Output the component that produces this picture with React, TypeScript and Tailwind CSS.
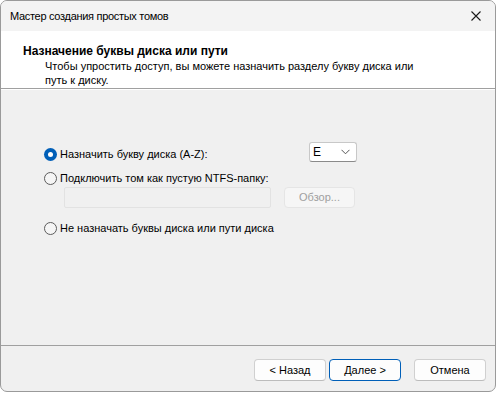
import React from 'react';

const font = { fontFamily: '"Liberation Sans", Arial, sans-serif' };

function Radio({ checked }: { checked?: boolean }) {
  if (checked) {
    return (
      <span className="w-[13px] h-[13px] rounded-full bg-[#005fb8] flex items-center justify-center shrink-0">
        <span className="w-[5px] h-[5px] rounded-full bg-white" />
      </span>
    );
  }
  return <span className="w-[13px] h-[13px] rounded-full border border-[#5c5c5c] bg-[#f5f5f5] shrink-0" />;
}

function Button({ label, primary }: { label: string; primary?: boolean }) {
  return (
    <div
      className={
        'w-[72px] h-[22px] rounded-[4px] bg-[#fdfdfd] flex items-center justify-center text-[11px] text-black border ' +
        (primary ? 'border-[#005fb8]' : 'border-[#d0d0d0] border-b-[#bcbcbc]')
      }
    >
      {label}
    </div>
  );
}

export default function App() {
  return (
    <div className="w-[499px] h-[393px] bg-white" style={font}>
      <div className="w-[496px] h-[392px] border border-[#9a9a9a] rounded-[7px] overflow-hidden flex flex-col bg-[#f0f0f0]">
        {/* Title bar */}
        <div className="h-[30px] shrink-0 bg-[#f3f3f3] flex items-center justify-between pl-[9px] pr-[10px]">
          <span className="text-[11px] tracking-[-0.3px] text-black">Мастер создания простых томов</span>
          <svg width="10" height="10" viewBox="0 0 10 10" className="mr-[4px]">
            <path d="M0.5 0.5 L9.5 9.5 M9.5 0.5 L0.5 9.5" stroke="#1a1a1a" strokeWidth="1.1" />
          </svg>
        </div>

        {/* Header */}
        <div className="h-[58px] shrink-0 bg-white pl-[22px] pt-[14px] border-b border-[#a0a0a0]">
          <div className="text-[12px] font-bold text-black leading-[13px]">Назначение буквы диска или пути</div>
          <div className="pl-[22px] text-[11px] text-black leading-[14px] mt-[1px]">
            Чтобы упростить доступ, вы можете назначить разделу букву диска или
            <br />
            путь к диску.
          </div>
        </div>
        <div className="h-px bg-white shrink-0" />

        {/* Body */}
        <div className="flex-1 pl-[43px] pt-[52px] text-[11px] text-black">
          <div className="flex h-[20px]">
            <div className="w-[265px] flex items-center gap-[3px] pt-[4px]">
              <Radio checked />
              <span>Назначить букву диска (A-Z):</span>
            </div>
            <div className="w-[48px] h-[20px] bg-white border border-[#c8c8c8] border-b-[#8a8a8a] rounded-[3px] flex items-center justify-between pl-[3px] pr-[6px] text-[12px]">
              <span>E</span>
              <svg width="9" height="6" viewBox="0 0 9 6">
                <path d="M0.5 0.8 L4.5 4.8 L8.5 0.8" fill="none" stroke="#555" strokeWidth="1" />
              </svg>
            </div>
          </div>

          <div className="flex items-center gap-[3px] h-[16px] mt-[8px]">
            <Radio />
            <span>Подключить том как пустую NTFS-папку:</span>
          </div>

          <div className="flex mt-[1px] ml-[20px] gap-[13px]">
            <div className="w-[207px] h-[21px] border border-[#e2e2e2] bg-[#f0f0f0] rounded-[2px]" />
            <div className="w-[71px] h-[21px] border border-[#e5e5e5] bg-[#f6f6f6] rounded-[4px] flex items-center justify-center text-[#a0a0a0]">
              Обзор...
            </div>
          </div>

          <div className="flex items-center gap-[3px] h-[16px] mt-[12px]">
            <Radio />
            <span>Не назначать буквы диска или пути диска</span>
          </div>
        </div>

        {/* Footer */}
        <div className="h-[46px] shrink-0 border-t border-[#a0a0a0] flex items-start justify-end pt-[13px] pr-[9px]">
          <div className="flex gap-[3px]">
            <Button label="< Назад" />
            <Button label="Далее >" primary />
          </div>
          <div className="ml-[13px]">
            <Button label="Отмена" />
          </div>
        </div>
      </div>
    </div>
  );
}
